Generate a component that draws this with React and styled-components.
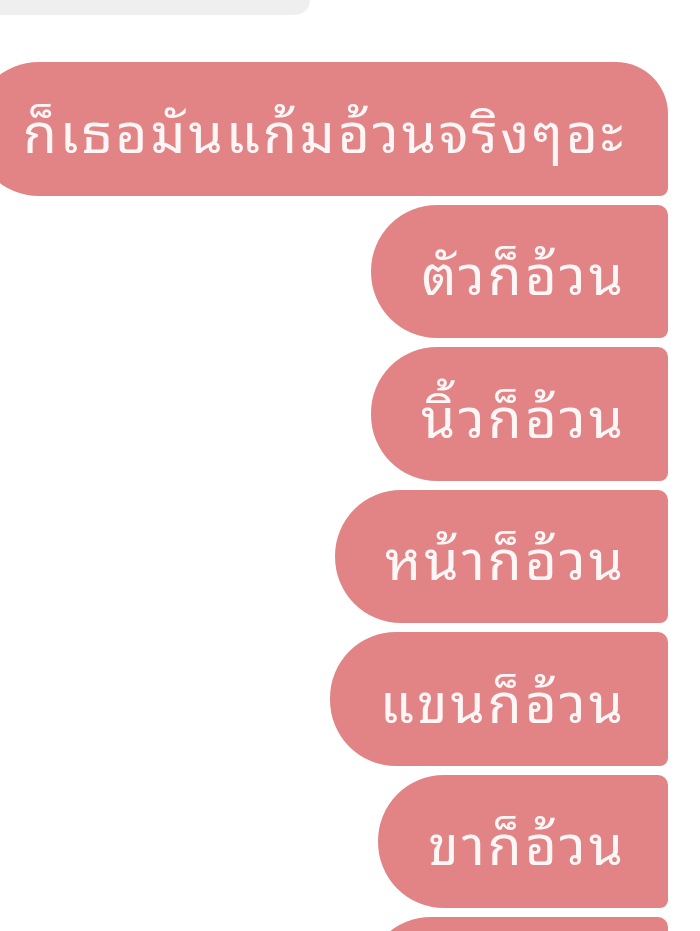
import styled, { createGlobalStyle } from "styled-components";

const Global = createGlobalStyle`
  html, body {
    margin: 0;
    padding: 0;
    background: #ffffff;
    overflow: hidden;
  }
  body {
    font-family: "Noto Sans Thai Looped", "Noto Sans Thai", "Noto Sans", "DejaVu Sans", sans-serif;
  }
`;

const Screen = styled.div`
  width: 700px;
  height: 931px;
  overflow: hidden;
  display: flex;
  flex-direction: column;
`;

const PrevBubble = styled.div`
  width: 310px;
  height: 15px;
  background: #efefef;
  border-bottom-right-radius: 32px;
  flex-shrink: 0;
`;

const Thread = styled.div`
  display: flex;
  flex-direction: column;
  align-items: flex-end;
  gap: 9px;
  margin-top: 47px;
  padding-right: 32px;
`;

const Bubble = styled.div`
  flex-shrink: 0;
  height: 133.5px;
  box-sizing: border-box;
  display: flex;
  align-items: center;
  padding: 0 42px 2px 50px;
  background: #e28485;
  color: #fdf6f6;
  font-size: 55px;
  letter-spacing: 3px;
  white-space: nowrap;
  border-radius: 66px ${(p) => (p.$first ? "52px" : "10px")} 8px 66px;
`;

const messages = [
  "ก็เธอมันแก้มอ้วนจริงๆอะ",
  "ตัวก็อ้วน",
  "นิ้วก็อ้วน",
  "หน้าก็อ้วน",
  "แขนก็อ้วน",
  "ขาก็อ้วน",
  "พุงก็อ้วน",
];

export default function App() {
  return (
    <Screen>
      <Global />
      <PrevBubble />
      <Thread>
        {messages.map((m, i) => (
          <Bubble key={i} $first={i === 0}>
            {m}
          </Bubble>
        ))}
      </Thread>
    </Screen>
  );
}
